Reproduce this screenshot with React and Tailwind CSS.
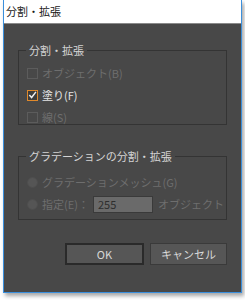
import React from "react";

const font = { fontFamily: '"Noto Sans CJK JP", "Noto Sans", sans-serif' };

function Check({ checked, disabled, label }) {
  return (
    <div className="flex items-center h-[22px] gap-[4px]">
      <div
        className={
          "w-[11px] h-[11px] border flex items-center justify-center " +
          (checked ? "border-[#e0892b] bg-[#3c3c3c]" : "border-[#5c5c5c] bg-[#484848]")
        }
      >
        {checked && (
          <svg width="10" height="10" viewBox="0 0 10 10">
            <path d="M1.5 5 L4 7.8 L8.8 1.5" stroke="#f0f0f0" strokeWidth="1.6" fill="none" />
          </svg>
        )}
      </div>
      <span className={"text-[11px] leading-none whitespace-nowrap " + (disabled ? "text-[#6e6e6e]" : "text-[#e4e4e4]")}>
        {label}
      </span>
    </div>
  );
}

function Radio({ children }) {
  return (
    <div className="flex items-center gap-[4px] whitespace-nowrap">
      <div className="w-[11px] h-[11px] rounded-full bg-[#555555] border border-[#4e4e4e] shrink-0" />
      {children}
    </div>
  );
}

export default function App() {
  return (
    <div className="w-[245px] h-[300px] bg-white overflow-hidden" style={font}>
      <div className="ml-[3px] w-[239px] h-[293px] border border-t-0 border-[#3b8fdc] bg-[#484848] shadow-[2px_3px_4px_rgba(0,0,0,0.35)] flex flex-col">
        <div className="h-[24px] bg-white flex items-center pl-[2px] text-[11px] text-[#1a1a1a] border-b border-[#8a8a8a] shrink-0">
          分割・拡張
        </div>
        <div className="flex flex-col px-[14px] pt-[19px]">
          <fieldset className="min-w-0 border border-[#343434] h-[82px] px-[8px] pt-[5px]">
            <legend className="px-[3px] ml-[-1px] text-[11px] leading-[14px] text-[#d4d4d4]">分割・拡張</legend>
            <Check disabled label="オブジェクト(B)" />
            <Check checked label="塗り(F)" />
            <Check disabled label="線(S)" />
          </fieldset>
          <fieldset className="min-w-0 mt-[24px] border border-[#343434] h-[71px] px-[8px] pt-[8px]">
            <legend className="px-[3px] ml-[-1px] text-[11px] leading-[14px] text-[#d4d4d4] whitespace-nowrap">
              グラデーションの分割・拡張
            </legend>
            <div className="h-[22px] flex items-center">
              <Radio>
                <span className="text-[11px] leading-none text-[#6e6e6e]">グラデーションメッシュ(G)</span>
              </Radio>
            </div>
            <div className="h-[22px] flex items-center">
              <Radio>
                <span className="text-[11px] leading-none text-[#6e6e6e]">指定(E)：</span>
                <div className="w-[60px] h-[17px] bg-[#6a6a6a] border border-[#3a3a3a] flex items-center pl-[4px] text-[11px] text-[#2e2e2e] shrink-0">
                  255
                </div>
                <span className="ml-[1px] text-[11px] leading-none text-[#6e6e6e]">オブジェクト</span>
              </Radio>
            </div>
          </fieldset>
          <div className="flex justify-end gap-[6px] mt-[23px]">
            <button className="w-[79px] h-[22px] bg-[#565656] border-2 border-[#2a2a2a] text-[11px] text-[#d8d8d8] flex items-center justify-center">
              OK
            </button>
            <button className="w-[77px] h-[22px] bg-[#565656] border border-[#3a3a3a] text-[11px] text-[#d8d8d8] flex items-center justify-center">
              キャンセル
            </button>
          </div>
        </div>
      </div>
    </div>
  );
}
